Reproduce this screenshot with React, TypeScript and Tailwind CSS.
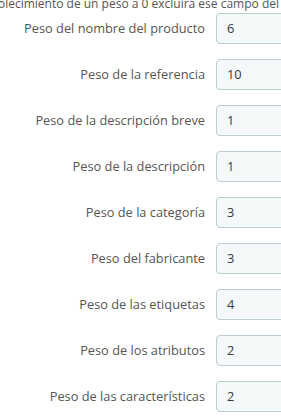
const rows = [
  { label: "Peso del nombre del producto", value: "6" },
  { label: "Peso de la referencia", value: "10" },
  { label: "Peso de la descripción breve", value: "1" },
  { label: "Peso de la descripción", value: "1" },
  { label: "Peso de la categoría", value: "3" },
  { label: "Peso del fabricante", value: "3" },
  { label: "Peso de las etiquetas", value: "4" },
  { label: "Peso de los atributos", value: "2" },
  { label: "Peso de las características", value: "2" },
];

const App = () => {
  return (
    <div className="h-[420px] w-[281px] overflow-hidden bg-white font-['Open_Sans',sans-serif] text-[12.8px] text-[#555]">
      <div className="-mt-[5px] flex h-[18px] justify-end overflow-hidden whitespace-nowrap pr-[2px] text-[12px] leading-[18px]">
        El establecimiento de un peso a 0 excluirá ese campo del
      </div>
      <div className="flex flex-col gap-[15px]">
        {rows.map((row) => (
          <div key={row.label} className="flex items-center gap-[11px]">
            <label className="w-[205px] shrink-0 text-right">{row.label}</label>
            <div className="flex h-[31px] w-[100px] shrink-0 items-center rounded-[4px] border border-[#bbcdd2] bg-[#f5f8f9] pl-[10px] text-[#363a41]">
              {row.value}
            </div>
          </div>
        ))}
      </div>
    </div>
  );
};

export default App;
